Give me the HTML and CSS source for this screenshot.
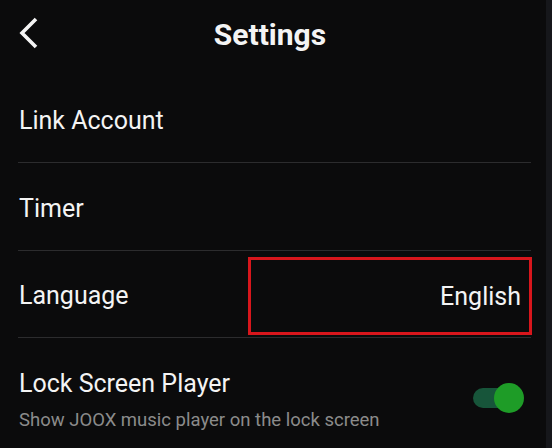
FILE: index.html
```html
<!DOCTYPE html>
<html lang="en">
<head>
<meta charset="utf-8">
<title>Settings</title>
<link rel="stylesheet" href="styles.css">
</head>
<body>
<div class="app">
  <main class="screen">
    <header class="topbar">
      <button class="back" aria-label="Back">
        <svg width="20" height="32" viewBox="0 0 20 32"><polyline points="17,2 3,16 17,30" fill="none" stroke="#f4f4f4" stroke-width="3.6"/></svg>
      </button>
      <h1 class="title">Settings</h1>
    </header>
    <ul class="list">
      <li class="row"><span class="label">Link Account</span></li>
      <li class="row"><span class="label">Timer</span></li>
      <li class="row">
        <span class="label">Language</span>
        <span class="value-box"><span class="value">English</span></span>
      </li>
      <li class="row row-last">
        <div class="text-col">
          <span class="label">Lock Screen Player</span>
          <span class="sub">Show JOOX music player on the lock screen</span>
        </div>
        <span class="toggle"><span class="track"></span><span class="knob"></span></span>
      </li>
    </ul>
  </main>
  <div class="edge"></div>
</div>
</body>
</html>
```

FILE: styles.css
```css
* { box-sizing: border-box; }
html, body { margin: 0; padding: 0; }
body {
  background: #0b0b0c;
  font-family: Roboto, "Noto Sans", sans-serif;
  color: #f4f4f4;
  width: 552px;
  height: 448px;
  overflow: hidden;
}
.app { display: flex; height: 448px; }
.screen { flex: 1; }
.edge { width: 6px; background: #16171b; }

.topbar {
  position: relative;
  height: 75.5px;
  display: flex;
  align-items: center;
  justify-content: center;
}
.back {
  position: absolute;
  left: 19px;
  top: 17px;
  padding: 0;
  border: 0;
  background: none;
  display: flex;
}
.title {
  margin: 0 6px 6px 0;
  font-size: 30px;
  font-weight: 700;
  letter-spacing: 0;
}

.list { list-style: none; margin: 0; padding: 0 15px 0 18px; }
.row {
  height: 87.5px;
  border-bottom: 1px solid #2c2c2e;
  display: flex;
  align-items: center;
  padding-top: 4px;
}
.row-last { border-bottom: 0; align-items: flex-start; padding-top: 31px; }
.label { font-size: 25px; padding-left: 1px; }
.value-box {
  margin-left: auto;
  margin-right: -1px;
  align-self: flex-start;
  margin-top: 2px;
  width: 284px;
  height: 78px;
  border: 3px solid #d8161c;
  display: flex;
  align-items: center;
  justify-content: flex-end;
  padding-right: 8px;
}
.value { font-size: 25px; margin-top: 2px; }

.text-col { display: flex; flex-direction: column; }
.sub { font-size: 18.5px; color: #8b8b8b; margin-top: 11px; padding-left: 1px; }

.toggle {
  position: relative;
  margin-left: auto;
  margin-right: 7px;
  margin-top: 14px;
  width: 51px;
  height: 30px;
}
.track {
  position: absolute;
  left: 0; top: 5px;
  width: 40px; height: 20px;
  border-radius: 10px;
  background: #17553a;
}
.knob {
  position: absolute;
  right: 0; top: 0;
  width: 30px; height: 30px;
  border-radius: 50%;
  background: #1e9c27;
}
```
